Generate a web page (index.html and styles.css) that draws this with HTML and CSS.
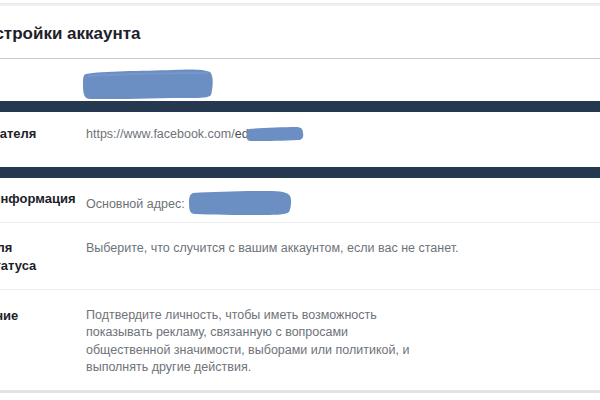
FILE: index.html
```html
<!DOCTYPE html>
<html lang="ru">
<head>
<meta charset="utf-8">
<link rel="stylesheet" href="styles.css">
</head>
<body>
<div class="topshade"></div>
<div class="card">
  <div class="header">Общие настройки аккаунта</div>
  <div class="row row-name">
    <div class="label">Имя</div>
    <div class="value">
      <svg class="blot blot-name" width="132" height="32" viewBox="0 0 132 32"><path d="M4 6 C20 3 60 3 90 2 C108 1 122 1 128 4 C132 8 131 20 129 27 C126 31 110 30 90 30 C60 31 30 31 8 31 C3 31 1 27 1 18 C1 10 1 7 4 6 Z" fill="#6c8fc3"/><path d="M6 8 C40 6 90 5 126 5" stroke="#7f9fcf" stroke-width="2" fill="none" opacity="0.5"/></svg>
    </div>
  </div>
  <div class="band"></div>
  <div class="row row-user">
    <div class="label">Имя пользователя</div>
    <div class="value">https://www.facebook.com/<span class="dark">ed</span><svg class="blot blot-user" width="58" height="16" viewBox="0 0 58 16"><path d="M3 3 C15 2 35 1 50 1 C55 1 57 3 57 7 C58 11 56 14 52 14 C38 15 18 15 5 15 C1 15 0 12 1 8 C1 5 1 4 3 3 Z" fill="#6c8fc3"/></svg></div>
  </div>
  <div class="band"></div>
  <div class="row row-contact">
    <div class="label">Контактная информация</div>
    <div class="value">Основной адрес: <svg class="blot blot-contact" width="104" height="26" viewBox="0 0 104 26"><path d="M5 3 C25 2 55 1 80 1 C92 1 100 2 102 6 C104 10 103 18 101 22 C98 25 85 25 70 25 C50 25 25 25 7 24 C2 24 1 20 1 13 C1 7 2 4 5 3 Z" fill="#6c8fc3"/></svg></div>
  </div>
  <div class="row row-memorial">
    <div class="label">Настройки для<br>памятного статуса</div>
    <div class="value">Выберите, что случится с вашим аккаунтом, если вас не станет.</div>
  </div>
  <div class="row row-confirm">
    <div class="label">Подтверждение</div>
    <div class="value">Подтвердите личность, чтобы иметь возможность<br>показывать рекламу, связанную с вопросами<br>общественной значимости, выборами или политикой, и<br>выполнять другие действия.</div>
  </div>
</div>
</body>
</html>
```

FILE: styles.css
```css
html, body {
  margin: 0;
  padding: 0;
  background: #ffffff;
  overflow: hidden;
}
body {
  width: 600px;
  height: 400px;
  font-family: "Liberation Sans", Arial, sans-serif;
  font-size: 12.5px;
  color: #1d2129;
}
.topshade {
  height: 3px;
  margin-top: 3px;
  background: linear-gradient(#e6e6e6, #f6f6f6);
}
.card {
  margin-left: -84px;
  border-bottom: 3px solid #e3e3e3;
}
.header {
  height: 53px;
  box-sizing: border-box;
  padding-top: 18px;
  text-indent: -4px;
  font-size: 17px;
  font-weight: bold;
  line-height: 19px;
  color: #1d2129;
  border-bottom: 1px solid #cccccc;
}
.row {
  display: grid;
  grid-template-columns: 170px 1fr;
  box-sizing: border-box;
  line-height: 18px;
}
.label {
  font-size: 13px;
  font-weight: bold;
  color: #1d2129;
}
.value {
  color: #6e737a;
}
.dark {
  color: #4b4f56;
}
.band {
  height: 11px;
  background: #253850;
}
.row-name {
  height: 42px;
  padding-top: 9px;
}
.row-name .label {
  visibility: hidden;
}
.blot {
  display: inline-block;
}
.blot-name {
  margin-left: -4px;
  vertical-align: top;
}
.row-user {
  height: 55px;
  padding-top: 13px;
}
.blot-user {
  vertical-align: -4px;
  margin-left: -3px;
}
.row-contact {
  height: 45px;
  padding-top: 12px;
  border-bottom: 1px solid #ededed;
}
.blot-contact {
  vertical-align: -8px;
  margin-left: 0;
}
.row-memorial {
  height: 67px;
  padding-top: 16px;
  border-bottom: 1px solid #ededed;
}
.row-confirm {
  height: 100px;
  padding-top: 17px;
  line-height: 17.3px;
}
```
